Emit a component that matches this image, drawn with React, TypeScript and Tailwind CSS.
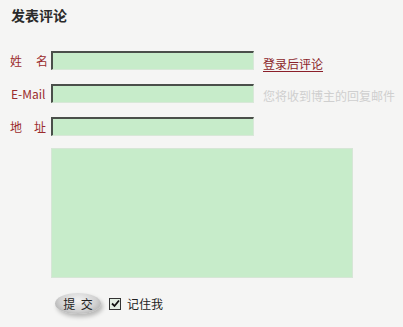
import React from "react";

const font = { fontFamily: '"Noto Sans CJK SC", "Liberation Sans", sans-serif' };

function Field({ label, right }: { label: React.ReactNode; right?: React.ReactNode }) {
  return (
    <div className="flex items-center h-[19px]">
      <div className="w-[38px] text-[12px] text-[#9b2c2c] flex justify-between leading-none">{label}</div>
      <div className="ml-[3px] w-[203px] h-[19px] bg-[#c7ecca] border-t-2 border-l-2 border-t-[#4a4f4a] border-l-[#4a4f4a] border-b border-r border-b-[#d8e8d8] border-r-[#d8e8d8]" />
      {right}
    </div>
  );
}

export default function App() {
  return (
    <div className="w-[403px] h-[327px] bg-[#f5f5f4] pl-[10px] pt-[7px]" style={font}>
      <div className="text-[14px] font-bold text-[#2a2a2a] leading-[17px] ml-[1px]">发表评论</div>
      <div className="mt-[27px] flex flex-col gap-[14px]">
        <Field
          label={<><span>姓</span><span>名</span></>}
          right={<span className="ml-[9px] mt-[6px] text-[12px] text-[#8b1f2a] underline underline-offset-2">登录后评论</span>}
        />
        <Field
          label={<span className="ml-[1px]">E-Mail</span>}
          right={<span className="ml-[9px] mt-[5px] text-[12px] text-[#cfcfcf]">您将收到博主的回复邮件</span>}
        />
        <Field label={<><span>地</span><span className="mr-[2px]">址</span></>} />
      </div>
      <div className="ml-[41px] mt-[12px] w-[302px] h-[130px] bg-[#c7ecca] border border-[#d6e6d6]" />
      <div className="mt-[15px] ml-[45px] flex items-center">
        <div
          className="w-[46px] h-[21px] rounded-[50%] flex items-center justify-center text-[12px] text-[#222] shadow-[2px_3px_4px_rgba(0,0,0,0.25)]"
          style={{ background: "radial-gradient(ellipse at 50% 35%, #f2f2f2 0%, #d2d2d2 55%, #9a9a9a 100%)" }}
        >
          提&nbsp;&nbsp;交
        </div>
        <div className="ml-[8px] w-[12px] h-[12px] bg-[#e2eee2] border border-[#333] flex items-center justify-center">
          <svg width="9" height="9" viewBox="0 0 9 9">
            <path d="M1 4.5 L3.5 7 L8 1.5" stroke="#111" strokeWidth="1.8" fill="none" />
          </svg>
        </div>
        <span className="ml-[6px] text-[12px] text-[#222]">记住我</span>
      </div>
    </div>
  );
}
